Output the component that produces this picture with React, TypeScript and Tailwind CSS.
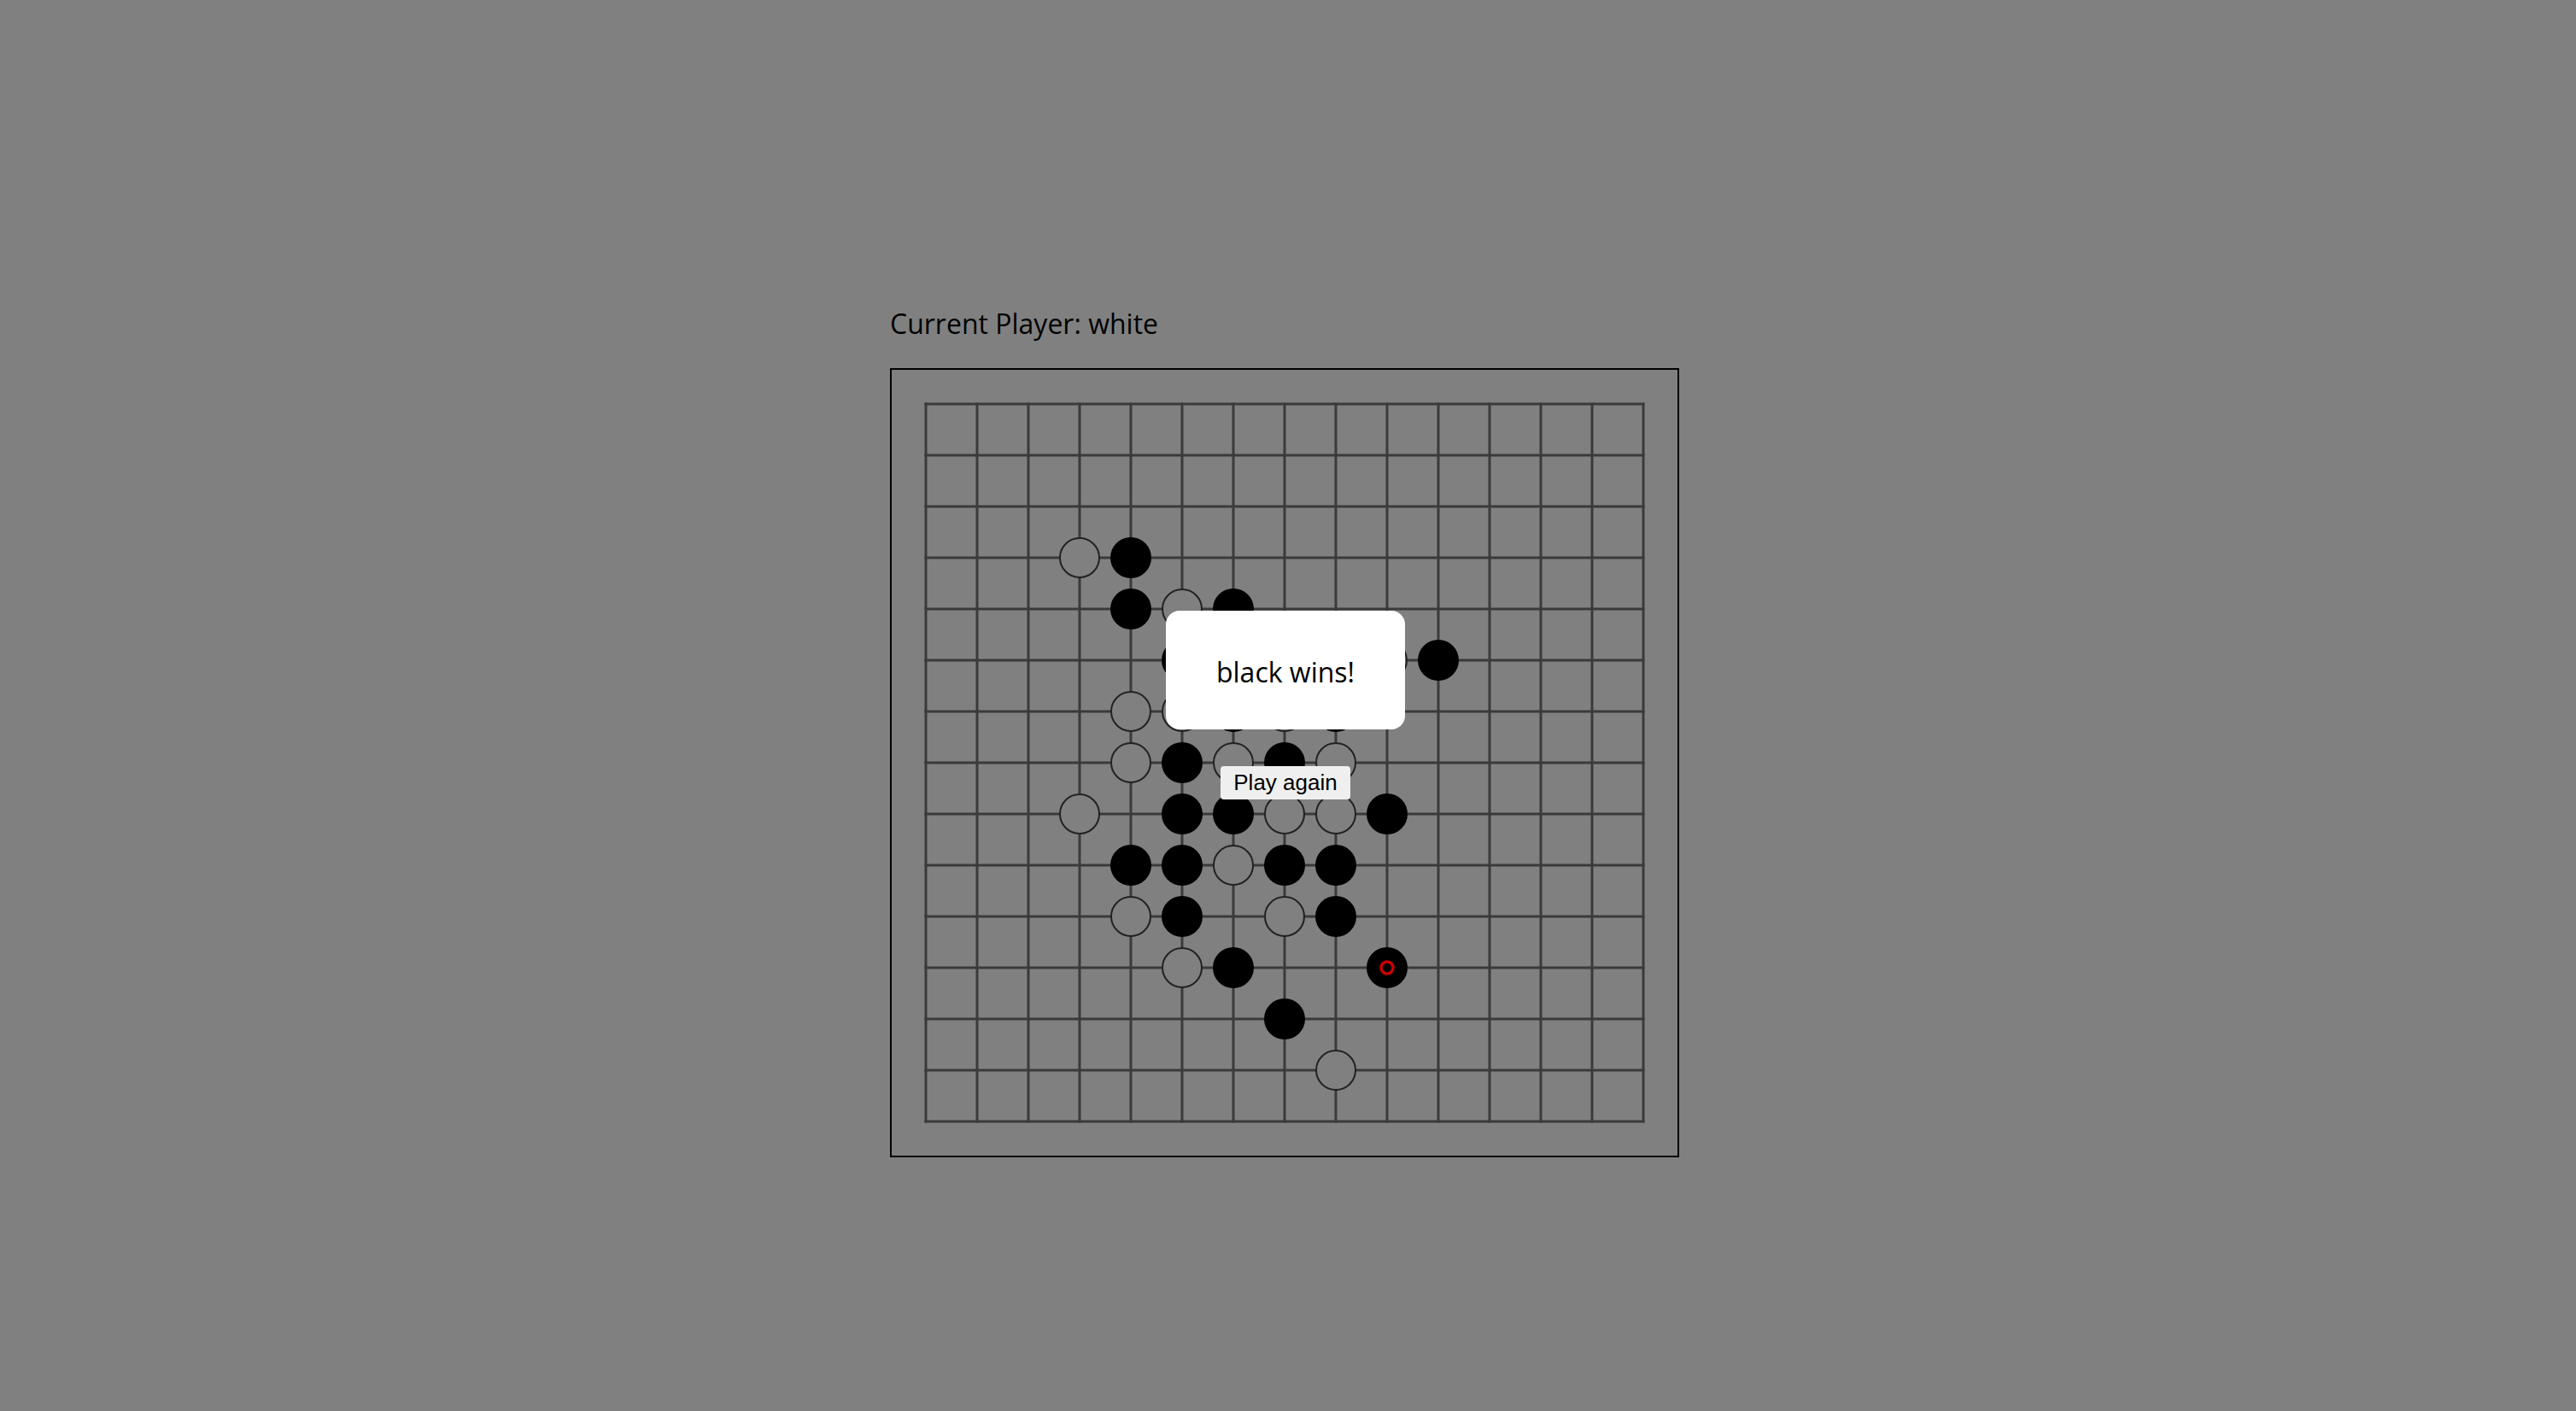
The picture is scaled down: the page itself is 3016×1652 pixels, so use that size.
import React from 'react';

// Gomoku board: 15x15 lines, drawn into an svg with a 40px margin
const SIZE = 15;
const CELL = 60;
const PAD = 40;

type Color = 'black' | 'white';

interface Stone {
  x: number;
  y: number;
  color: Color;
}

const blackMoves: [number, number][] = [
  [4, 3], [4, 4], [6, 4], [5, 5], [10, 5], [6, 6], [8, 6],
  [5, 7], [7, 7], [5, 8], [6, 8], [9, 8], [4, 9], [5, 9],
  [7, 9], [8, 9], [5, 10], [8, 10], [6, 11], [9, 11], [7, 12],
];

const whiteMoves: [number, number][] = [
  [3, 3], [5, 4], [6, 5], [7, 5], [8, 5], [9, 5], [4, 6], [5, 6],
  [7, 6], [4, 7], [6, 7], [8, 7], [3, 8], [7, 8], [8, 8], [6, 9],
  [4, 10], [7, 10], [5, 11], [8, 13],
];

const stones: Stone[] = [
  ...blackMoves.map(([x, y]) => ({ x, y, color: 'black' as Color })),
  ...whiteMoves.map(([x, y]) => ({ x, y, color: 'white' as Color })),
];

const lastMove = { x: 9, y: 11 };

function Board() {
  const span = CELL * (SIZE - 1);
  const dim = span + PAD * 2;
  const at = (i: number) => PAD + i * CELL;

  return (
    <svg width={dim} height={dim} className="block">
      {Array.from({ length: SIZE }, (_, i) => (
        <g key={i} stroke="#3a3a3a" strokeWidth={3} strokeLinecap="square">
          <line x1={PAD} y1={at(i)} x2={PAD + span} y2={at(i)} />
          <line x1={at(i)} y1={PAD} x2={at(i)} y2={PAD + span} />
        </g>
      ))}
      {stones.map((s) =>
        s.color === 'black' ? (
          <circle key={`${s.x}-${s.y}`} cx={at(s.x)} cy={at(s.y)} r={24} fill="#000" />
        ) : (
          <circle
            key={`${s.x}-${s.y}`}
            cx={at(s.x)}
            cy={at(s.y)}
            r={23}
            fill="#808080"
            stroke="#222"
            strokeWidth={2}
          />
        )
      )}
      <circle cx={at(lastMove.x)} cy={at(lastMove.y)} r={7} fill="none" stroke="#cc0000" strokeWidth={3.5} />
    </svg>
  );
}

export default function App() {
  const winner: Color = 'black';
  const current: Color = 'white';

  return (
    <div className="min-h-screen bg-[#808080] flex justify-center pr-[8px] pt-[360px] font-['Open_Sans',sans-serif] text-black">
      <div className="flex flex-col">
        <p className="text-[32px] leading-[38px] mb-[33px]">Current Player: {current}</p>
        <div className="relative border-2 border-black">
          <Board />
          <div className="absolute inset-0 flex flex-col items-center pl-[2px] pt-[282px]">
            <div className="w-[280px] h-[139px] rounded-[16px] bg-white flex items-center justify-center pt-[5px]">
              <span className="text-[32px]">{winner} wins!</span>
            </div>
            <button className="mt-[43px] h-[39px] px-[15px] rounded-[4px] bg-[#efefef] text-[26px] leading-[29px] font-['Liberation_Sans',Arial,sans-serif] text-black">
              Play again
            </button>
          </div>
        </div>
      </div>
    </div>
  );
}
